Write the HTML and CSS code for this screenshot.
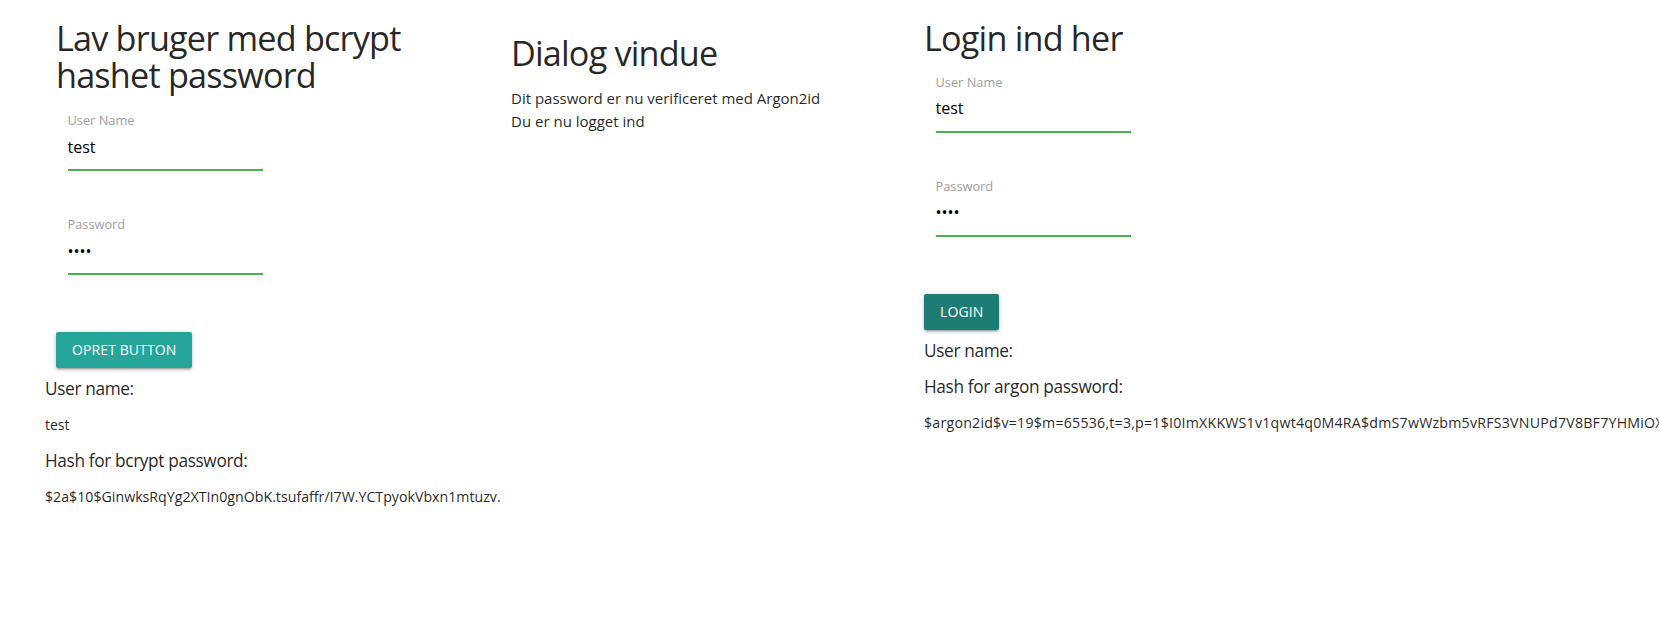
FILE: index.html
```html
<!DOCTYPE html>
<html lang="da">
<head>
<meta charset="utf-8">
<title>Bruger og login</title>
<link rel="stylesheet" href="styles.css">
</head>
<body>
<div class="page">
  <section class="col col-create">
    <div class="inner">
      <h4 class="title">Lav bruger med bcrypt hashet password</h4>
      <div class="field field-first">
        <label class="field-label">User Name</label>
        <input class="field-input" type="text" value="test">
      </div>
      <div class="field field-next">
        <label class="field-label">Password</label>
        <input class="field-input" type="password" value="test">
      </div>
      <div class="actions">
        <button class="btn">Opret button</button>
      </div>
    </div>
    <h6 class="result-label">User name:</h6>
    <p class="value">test</p>
    <h6 class="result-label">Hash for bcrypt password:</h6>
    <p class="value hash">$2a$10$GinwksRqYg2XTIn0gnObK.tsufaffr/I7W.YCTpyokVbxn1mtuzv.</p>
  </section>

  <section class="col col-dialog">
    <h4 class="title title-dialog">Dialog vindue</h4>
    <p class="dialog-line dialog-first">Dit password er nu verificeret med Argon2id</p>
    <p class="dialog-line">Du er nu logget ind</p>
  </section>

  <section class="col col-login">
    <h4 class="title">Login ind her</h4>
    <div class="field field-first field-login">
      <label class="field-label">User Name</label>
      <input class="field-input" type="text" value="test">
    </div>
    <div class="field field-next">
      <label class="field-label">Password</label>
      <input class="field-input" type="password" value="test">
    </div>
    <div class="actions">
      <button class="btn btn-focus">Login</button>
    </div>
    <h6 class="result-label">User name:</h6>
    <p class="value"></p>
    <h6 class="result-label">Hash for argon password:</h6>
    <p class="value hash hash-argon">$argon2id$v=19$m=65536,t=3,p=1$I0ImXKKWS1v1qwt4q0M4RA$dmS7wWzbm5vRFS3VNUPd7V8BF7YHMiOX</p>
  </section>
</div>
</body>
</html>
```
FILE: styles.css
```css
html, body {
  margin: 0;
  padding: 0;
  background: #ffffff;
  overflow: hidden;
}

body {
  font-family: "Open Sans", "Noto Sans", sans-serif;
  font-size: 15px;
  line-height: 1.5;
  color: rgba(0, 0, 0, 0.87);
}

.page {
  display: flex;
  align-items: flex-start;
  width: 1659px;
}

.col {
  box-sizing: border-box;
  flex: none;
}

.col-create {
  width: 511px;
  padding-left: 45px;
}

.col-create .inner {
  padding-left: 11px;
}

.col-dialog {
  width: 413px;
}

.col-login {
  flex: 1;
  min-width: 0;
}

.title {
  font-size: 34.2px;
  line-height: 36.6px;
  font-weight: 400;
  letter-spacing: -0.8px;
  margin: 20px 0 0;
}

.title-dialog {
  margin-top: 35px;
}

.field {
  padding-left: 11.5px;
}

.field-first {
  margin-top: 19px;
}

.field-login {
  margin-top: 17px;
}

.field-next {
  margin-top: 46px;
}

.field-label {
  display: block;
  font-size: 12.8px;
  line-height: 16px;
  height: 16px;
  margin-bottom: -4px;
  color: #9e9e9e;
}

.field-input {
  display: block;
  box-sizing: content-box;
  width: 195px;
  height: 45px;
  padding: 0;
  margin: 0;
  border: none;
  border-bottom: 1px solid #4caf50;
  box-shadow: 0 1px 0 0 #4caf50;
  background: transparent;
  outline: none;
  font-family: inherit;
  font-size: 16px;
  color: #000000;
}

.actions {
  margin-top: 58px;
  height: 36px;
}

.btn {
  display: block;
  height: 36px;
  line-height: 36px;
  padding: 0 16px;
  border: none;
  border-radius: 2px;
  background: #26a69a;
  color: #ffffff;
  font-family: inherit;
  font-size: 14px;
  letter-spacing: 0.1px;
  text-transform: uppercase;
  box-shadow: 0 2px 2px 0 rgba(0, 0, 0, 0.14), 0 3px 1px -2px rgba(0, 0, 0, 0.12), 0 1px 5px 0 rgba(0, 0, 0, 0.2);
  cursor: pointer;
}

.btn-focus {
  background: #1d7d74;
}

.result-label {
  font-size: 17.25px;
  line-height: 19px;
  font-weight: 400;
  letter-spacing: -0.36px;
  margin: 11px 0 7px;
}

.value {
  font-size: 14px;
  line-height: 18px;
  margin: 17.5px 0;
}

.hash {
  font-size: 14.2px;
  white-space: nowrap;
}

.hash-argon {
  letter-spacing: 0.22px;
}

.dialog-line {
  margin: 0;
  font-size: 15px;
  line-height: 22.5px;
}

.dialog-first {
  margin-top: 15.5px;
}
```
